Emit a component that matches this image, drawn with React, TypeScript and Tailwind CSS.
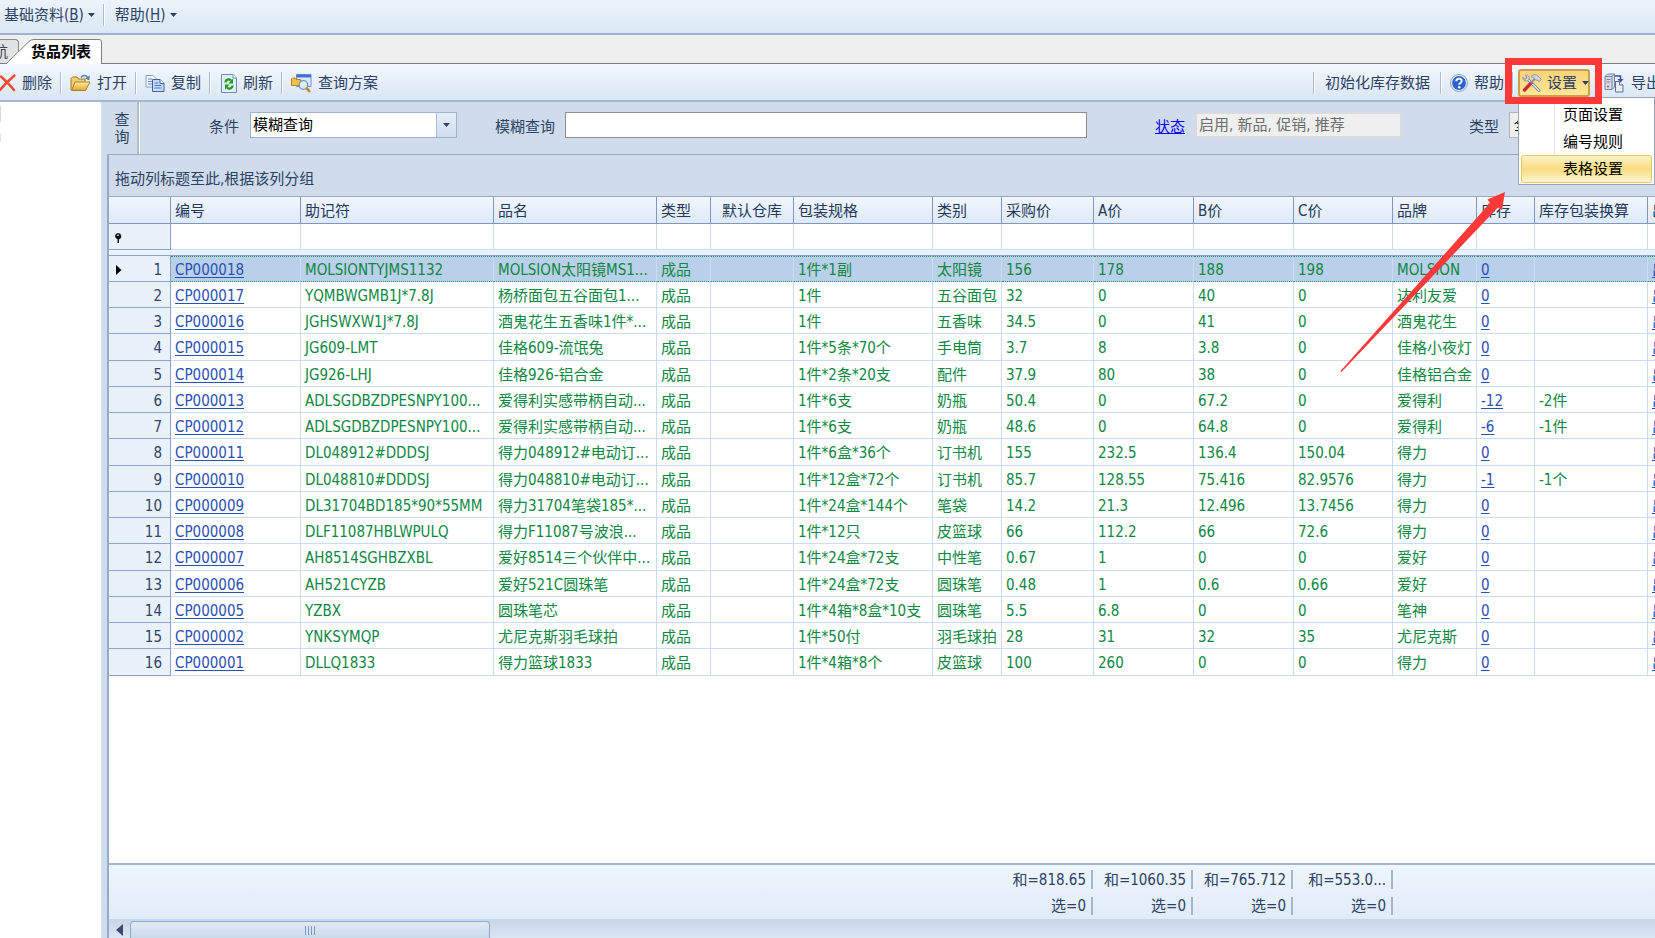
import type { ReactNode } from "react";

type Row = [string, string, string, string, string, string, string, string, string, string, string, string];

const rows: Row[] = [
  ["CP000018", "MOLSIONTYJMS1132", "MOLSION太阳镜MS1...", "1件*1副", "太阳镜", "156", "178", "188", "198", "MOLSION", "0", ""],
  ["CP000017", "YQMBWGMB1J*7.8J", "杨桥面包五谷面包1...", "1件", "五谷面包", "32", "0", "40", "0", "达利友爱", "0", ""],
  ["CP000016", "JGHSWXW1J*7.8J", "酒鬼花生五香味1件*...", "1件", "五香味", "34.5", "0", "41", "0", "酒鬼花生", "0", ""],
  ["CP000015", "JG609-LMT", "佳格609-流氓兔", "1件*5条*70个", "手电筒", "3.7", "8", "3.8", "0", "佳格小夜灯", "0", ""],
  ["CP000014", "JG926-LHJ", "佳格926-铝合金", "1件*2条*20支", "配件", "37.9", "80", "38", "0", "佳格铝合金", "0", ""],
  ["CP000013", "ADLSGDBZDPESNPY100...", "爱得利实感带柄自动...", "1件*6支", "奶瓶", "50.4", "0", "67.2", "0", "爱得利", "-12", "-2件"],
  ["CP000012", "ADLSGDBZDPESNPY100...", "爱得利实感带柄自动...", "1件*6支", "奶瓶", "48.6", "0", "64.8", "0", "爱得利", "-6", "-1件"],
  ["CP000011", "DL048912#DDDSJ", "得力048912#电动订...", "1件*6盒*36个", "订书机", "155", "232.5", "136.4", "150.04", "得力", "0", ""],
  ["CP000010", "DL048810#DDDSJ", "得力048810#电动订...", "1件*12盒*72个", "订书机", "85.7", "128.55", "75.416", "82.9576", "得力", "-1", "-1个"],
  ["CP000009", "DL31704BD185*90*55MM", "得力31704笔袋185*...", "1件*24盒*144个", "笔袋", "14.2", "21.3", "12.496", "13.7456", "得力", "0", ""],
  ["CP000008", "DLF11087HBLWPULQ", "得力F11087号波浪...", "1件*12只", "皮篮球", "66", "112.2", "66", "72.6", "得力", "0", ""],
  ["CP000007", "AH8514SGHBZXBL", "爱好8514三个伙伴中...", "1件*24盒*72支", "中性笔", "0.67", "1", "0", "0", "爱好", "0", ""],
  ["CP000006", "AH521CYZB", "爱好521C圆珠笔", "1件*24盒*72支", "圆珠笔", "0.48", "1", "0.6", "0.66", "爱好", "0", ""],
  ["CP000005", "YZBX", "圆珠笔芯", "1件*4箱*8盒*10支", "圆珠笔", "5.5", "6.8", "0", "0", "笔神", "0", ""],
  ["CP000002", "YNKSYMQP", "尤尼克斯羽毛球拍", "1件*50付", "羽毛球拍", "28", "31", "32", "35", "尤尼克斯", "0", ""],
  ["CP000001", "DLLQ1833", "得力篮球1833", "1件*4箱*8个", "皮篮球", "100", "260", "0", "0", "得力", "0", ""],
];

const headers = ["编号", "助记符", "品名", "类型", "默认仓库", "包装规格", "类别", "采购价", "A价", "B价", "C价", "品牌", "库存", "库存包装换算", "出"];

const summaries = [
  { sum: "和=818.65", picked: "选=0" },
  { sum: "和=1060.35", picked: "选=0" },
  { sum: "和=765.712", picked: "选=0" },
  { sum: "和=553.0...", picked: "选=0" },
];

function Caret() {
  return (
    <svg width="7" height="4" viewBox="0 0 7 4" className="shrink-0" aria-hidden="true">
      <path d="M0 0h7L3.500 4z" fill="#2b4265" />
    </svg>
  );
}

function Separator() {
  return <span className="h-[22px] w-[2px] shrink-0 border-l border-[#a9bcd6] bg-white" />;
}

function DeleteIcon() {
  return (
    <svg width="16" height="18" viewBox="0 0 16 18" className="shrink-0" aria-hidden="true">
      <path d="M1 2.500C5 6 10 11 14 16M14.500 1.500C9 6 4 11 0 16" fill="none" stroke="#f04a2c" strokeWidth="2.400" strokeLinecap="round" />
    </svg>
  );
}

function OpenIcon() {
  return (
    <svg width="21" height="18" viewBox="0 0 21 18" className="shrink-0" aria-hidden="true">
      <defs>
        <linearGradient id="folder" x1="0" y1="0" x2="0" y2="1">
          <stop offset="0" stopColor="#fff0a8" />
          <stop offset="1" stopColor="#dfa226" />
        </linearGradient>
      </defs>
      <path d="M1 16V4.500L2.500 3H7l1.500 2H15v3" fill="#f3cf6b" stroke="#9a7a35" />
      <path d="M1.500 16.500 5 8h15l-4.500 8.500z" fill="url(#folder)" stroke="#a8802f" />
      <path d="M11 3.500C13 .8 16.500 1 17.800 4" fill="none" stroke="#5f7da8" strokeWidth="1.500" />
      <path d="m19.800 1.500-.5 5-4.300-2z" fill="#5f7da8" />
    </svg>
  );
}

function CopyIcon() {
  return (
    <svg width="20" height="17" viewBox="0 0 20 17" className="shrink-0" aria-hidden="true">
      <path d="M1 .5h7l3 3v8.500H1z" fill="#f1f6fd" stroke="#8ba0c4" />
      <path d="M3 4h4M3 6.500h5M3 9h4" stroke="#5d86c9" />
      <path d="M7.500 4.500h7.500l4 4v8H7.500z" fill="#c9dcf6" stroke="#3f62a5" />
      <path d="M15 4.500v4h4" fill="#fff" stroke="#3f62a5" />
      <path d="M9.500 8h4M9.500 10.500h7M9.500 13h7" stroke="#4576c8" />
    </svg>
  );
}

function RefreshIcon() {
  return (
    <svg width="16" height="19" viewBox="0 0 16 19" className="shrink-0" aria-hidden="true">
      <path d="M.5.5H12l3.500 3.500v14.500H.5z" fill="#e4edf9" stroke="#6e8dbb" />
      <path d="M12 .5V4h3.500" fill="#fff" stroke="#6e8dbb" />
      <path d="M4.500 8.500C4.500 5.500 8 4.500 10 6.500" fill="none" stroke="#17a017" strokeWidth="2.200" />
      <path d="M12 4.500v5H7.500z" fill="#17a017" />
      <path d="M11.500 11.500c0 3-3.500 4-5.500 2" fill="none" stroke="#17a017" strokeWidth="2.200" />
      <path d="M4 15.500v-5h4.500z" fill="#17a017" />
    </svg>
  );
}

function QueryIcon() {
  return (
    <svg width="21" height="19" viewBox="0 0 21 19" className="shrink-0" aria-hidden="true">
      <path d="M5.500.5h14.500v12H5.500z" fill="#dce9fb" stroke="#6e92cf" />
      <path d="M5.500.5h14.500v3H5.500z" fill="#3f72cf" />
      <path d="M.5 11.500V5l1-1h3l1 1.500h4v6z" fill="#f1c04a" stroke="#b28624" />
      <circle cx="12.500" cy="11" r="4.300" fill="#d9f0fb" stroke="#7796b8" strokeWidth="1.300" />
      <path d="m15.700 14.300 2.500 2.700" stroke="#b98731" strokeWidth="2.600" strokeLinecap="round" />
    </svg>
  );
}

function HelpIcon() {
  return (
    <svg width="18" height="18" viewBox="0 0 18 18" className="shrink-0" aria-hidden="true">
      <circle cx="9" cy="9" r="8.500" fill="#e8eef8" stroke="#8ea5c9" />
      <circle cx="9" cy="9" r="6.900" fill="#2c66cc" />
      <path d="M6.300 7.200C6.300 3.800 11.800 3.900 11.700 7c0 1.900-2.500 1.900-2.500 3.800" fill="none" stroke="#fff" strokeWidth="1.900" />
      <circle cx="9.200" cy="13.200" r="1.200" fill="#fff" />
    </svg>
  );
}

function ToolsIcon() {
  return (
    <svg width="20" height="18" viewBox="0 0 20 18" className="shrink-0" aria-hidden="true">
      <path d="m5 4.500 12 12" stroke="#7285a3" strokeWidth="3" strokeLinecap="round" />
      <path d="m5 4.500 12 12" stroke="#dfe6f0" strokeWidth="1.300" strokeLinecap="round" />
      <path d="M.8 3.500 3.300 5.500 5 3.800 3.500 1C7 .8 8 4 6.300 6.300 4 7.500 1 7 .8 3.500z" fill="#d5deea" stroke="#7285a3" strokeWidth=".8" />
      <path d="M2.500 16 9 9.200" stroke="#c8283a" strokeWidth="3.400" strokeLinecap="round" />
      <path d="m9 9.200 4.500-5" stroke="#8292aa" strokeWidth="2" />
      <path d="M9 2.500C12-.5 15 .5 17.500 3.500l1.800 1.700-2 2.300-2-1.300-1.800-.2-2-2.300z" fill="#ccd6e4" stroke="#7285a3" strokeWidth=".8" />
    </svg>
  );
}

function ExportIcon() {
  return (
    <svg width="21" height="20" viewBox="0 0 21 20" className="shrink-0" aria-hidden="true">
      <path d="M1 3.500 3.500 1h7v13L8 16.500H1z" fill="#d6dce7" stroke="#77839c" />
      <path d="M1 3.500h7l2.500-2.500M8 3.500v13M2.500 6.500h4M2.500 9h4" fill="none" stroke="#77839c" />
      <circle cx="4" cy="13.500" r="1" fill="#c8452d" />
      <path d="M11 3h5.500v4" fill="none" stroke="#3451a5" strokeWidth="1.500" />
      <path d="M13.500 6h6l-3 3.500z" fill="#3451a5" />
      <path d="M11.500 8.500h4l3.500 3.500v7h-7.500z" fill="#e9effa" stroke="#54719f" />
      <path d="M15.500 8.500V12H19" fill="#fff" stroke="#54719f" />
    </svg>
  );
}

function ToolButton({ icon, children }: { icon?: ReactNode; children: ReactNode }) {
  return (
    <button type="button" className="flex shrink-0 items-center gap-[6px] whitespace-nowrap">
      {icon}
      {children}
    </button>
  );
}

function MenuBar() {
  return (
    <nav className="flex h-[35px] shrink-0 items-start border-b-2 border-[#9fb0cb] bg-linear-to-b from-[#edf3fb] to-[#dbe7f4] pl-1 pt-1">
      <button type="button" className="flex h-[22px] items-center gap-1">
        <span>基础资料(<u>B</u>)</span>
        <Caret />
      </button>
      <span className="ml-2 mr-[10px] flex"><Separator /></span>
      <button type="button" className="flex h-[22px] items-center gap-1">
        <span>帮助(<u>H</u>)</span>
        <Caret />
      </button>
    </nav>
  );
}

function TabStrip() {
  return (
    <div role="tablist" className="relative flex h-[29px] shrink-0 items-end border-b border-[#7d7d7d] bg-[#efefef]">
      <button type="button" role="tab" aria-selected="false" className="flex h-6 w-[19px] justify-end overflow-hidden rounded-tr-sm border-r border-t border-[#8a8a8a] bg-[#e2e2e2] pr-[10px] pt-px text-[#3c4654]">
        航
      </button>
      <button type="button" role="tab" aria-selected="true" className="relative -mb-px -ml-3 h-[25px] w-[95px] pl-6 text-left font-bold text-black">
        <svg width="95" height="25" viewBox="0 0 95 25" className="absolute left-0 top-0" aria-hidden="true">
          <path d="M0 25V23.500L22 2.500Q24 .5 27 .5H92Q94.500.5 94.500 3V25z" fill="#fff" />
          <path d="M0 24 22 2.500Q24 .5 27 .5H92Q94.500.5 94.500 3V25" fill="none" stroke="#808080" />
        </svg>
        <span className="relative whitespace-nowrap">货品列表</span>
      </button>
    </div>
  );
}

function SettingsMenu() {
  return (
    <div role="menu" className="absolute left-0 top-7 z-10 flex h-[88px] w-[137px] flex-col border border-[#9aa3b0] bg-white px-[2px] text-black">
      <span className="absolute left-[35px] top-0 h-[57px] w-px bg-[#e3e3e3]" />
      <button type="button" role="menuitem" className="h-[30px] pl-[42px] pt-[3px] text-left">页面设置</button>
      <button type="button" role="menuitem" className="h-[27px] pl-[42px] text-left">编号规则</button>
      <button type="button" role="menuitem" className="h-7 rounded-[3px] border border-[#e5c765] bg-linear-to-b from-[#fdf3c9] via-[#f8dc80] to-[#fdf6cf] pl-[41px] text-left">表格设置</button>
    </div>
  );
}

function Toolbar() {
  return (
    <div className="flex h-[38px] shrink-0 items-center border-b-2 border-[#a3b7d4] bg-linear-to-b from-[#f4f8fd] to-[#d9e6f4] pt-[2px]">
      <div className="flex items-center gap-2">
        <ToolButton icon={<DeleteIcon />}>删除</ToolButton>
        <Separator />
        <ToolButton icon={<OpenIcon />}>打开</ToolButton>
        <Separator />
        <ToolButton icon={<CopyIcon />}>复制</ToolButton>
        <Separator />
        <span className="pl-[2px]"><ToolButton icon={<RefreshIcon />}>刷新</ToolButton></span>
        <Separator />
        <ToolButton icon={<QueryIcon />}>查询方案</ToolButton>
      </div>
      <div className="ml-auto flex w-[342px] items-center">
        <Separator />
        <span className="px-[10px]"><ToolButton>初始化库存数据</ToolButton></span>
        <Separator />
        <span className="px-2"><ToolButton icon={<HelpIcon />}>帮助</ToolButton></span>
        <Separator />
        <div className="relative ml-1 shrink-0">
          <button type="button" aria-haspopup="menu" aria-expanded="true" className="flex h-7 w-[72px] items-center gap-[5px] rounded-[3px] border-2 border-[#c9a04d] bg-linear-to-b from-[#fbd27a] to-[#ffe694] pl-[2px]">
            <ToolsIcon />
            <span className="whitespace-nowrap">设置</span>
            <Caret />
          </button>
          <SettingsMenu />
          <div className="pointer-events-none absolute -left-[13px] -top-[11px] z-20 h-[46px] w-[97px] border-[7px] border-[#fc3838]" />
        </div>
        <span className="pl-[14px]"><ToolButton icon={<ExportIcon />}>导出</ToolButton></span>
      </div>
    </div>
  );
}

function FilterPanel() {
  return (
    <form className="flex h-[52px] shrink-0 items-start">
      <div className="flex h-full w-8 shrink-0 items-center justify-center border-r-2 border-[#b9bcc4] pt-px leading-[17px]">
        <span className="w-[15px]">查询</span>
      </div>
      <div className="flex h-full flex-1 items-start border-l border-white pt-[10px]">
        <label htmlFor="condition" className="ml-[69px] w-[41px] shrink-0 pt-px leading-7">条件</label>
        <div className="relative h-[26px] w-[207px] shrink-0">
          <select id="condition" className="h-full w-full appearance-none border border-[#9db1d0] bg-white pl-[2px] leading-6 text-black">
            <option>模糊查询</option>
          </select>
          <span className="pointer-events-none absolute right-px top-px flex h-6 w-5 items-center justify-center border-l border-[#a9bbd6] bg-linear-to-b from-[#e6eef8] to-[#cfdded]">
            <Caret />
          </span>
        </div>
        <label htmlFor="keyword" className="ml-[38px] w-[70px] shrink-0 whitespace-nowrap pt-px leading-7">模糊查询</label>
        <input id="keyword" type="text" className="h-[26px] min-w-0 flex-1 border border-[#8e8e8e] bg-white px-1 text-black" />
        <a href="#status" className="ml-[68px] w-10 shrink-0 pt-px leading-7 text-[#0000ff] underline">状态</a>
        <input type="text" aria-label="状态" disabled defaultValue="启用, 新品, 促销, 推荐" className="h-[26px] w-[207px] shrink-0 border-2 border-[#d9dbde] bg-[#efefef] pb-1 pl-[2px] text-[#6d6d6d]" />
        <label htmlFor="kind" className="ml-[67px] w-10 shrink-0 pt-px leading-7">类型</label>
        <select id="kind" className="h-[26px] w-[146px] shrink-0 appearance-none border border-[#b4b4b4] bg-[#efefef] pl-1 text-black">
          <option>全部</option>
        </select>
      </div>
    </form>
  );
}

const cell = "border-b border-r border-[#c8dcf6] px-1 pb-0 pt-[2px]";
const activeCell = "border-y border-r border-y-[#2c8f68] border-r-[#c8dcf6] [border-top-style:dotted] [border-bottom-style:dotted] bg-[#b9d0ea] px-1 pb-0 pt-px";
const fixedCell = "border-b border-r border-[#8ba3c7] bg-[#e9f1fb] pb-0 pt-[2px]";
const headCell = "border-b border-r border-[#7f97bd] bg-linear-to-b from-[#f2f7fd] to-[#dde9f7] px-1 pb-0 pt-[2px] font-normal";

function ProductTable() {
  return (
    <table className="w-[1646px] table-fixed border-separate border-spacing-0 whitespace-nowrap leading-[22px] text-[#0c8744]">
      <colgroup>
        <col className="w-[62px]" />
        <col className="w-[130px]" />
        <col className="w-[193px]" />
        <col className="w-[163px]" />
        <col className="w-[54px]" />
        <col className="w-[83px]" />
        <col className="w-[139px]" />
        <col className="w-[69px]" />
        <col className="w-[92px]" />
        <col className="w-[100px]" />
        <col className="w-[100px]" />
        <col className="w-[99px]" />
        <col className="w-[84px]" />
        <col className="w-[58px]" />
        <col className="w-[113px]" />
        <col className="w-[107px]" />
      </colgroup>
      <thead className="text-[#24395b]">
        <tr className="h-[27px]">
          <th className={headCell} aria-label="行号" />
          {headers.map((h) => (
            <th key={h} className={`${headCell} ${h === "默认仓库" ? "text-center" : "text-left"}`}>
              {h}
            </th>
          ))}
        </tr>
        <tr className="h-[26px]">
          <td className={`${fixedCell} pl-[5px]`}>
            <svg width="8" height="10" viewBox="0 0 8 10" aria-hidden="true">
              <path d="M4 0a3.500 3.200 0 0 1 1 6.200V10H3.500V6.200A3.500 3.200 0 0 1 4 0z" fill="#111" />
              <path d="M3 2.200h2" stroke="#fff" />
            </svg>
          </td>
          {headers.map((h) => (
            <td key={h} className={`${cell} bg-white`} />
          ))}
        </tr>
        <tr className="h-[6px]">
          <td colSpan={16} className="border-b border-[#8ba3c7] bg-[#e9f1fb] p-0" />
        </tr>
      </thead>
      <tbody>
        {rows.map(([code, memo, name, spec, kind, cost, a, b, c, brand, stock, pack], i) => {
          const base = i === 0 ? activeCell : `${cell} bg-white`;
          return (
            <tr key={code} className="h-[26px] [&:nth-child(4n)]:h-[27px]">
              <th scope="row" className={`${fixedCell} pr-2 font-normal text-[#2f4668]`}>
                <span className="flex items-center justify-end">
                  {i === 0 && (
                    <svg width="6" height="10" viewBox="0 0 6 10" className="ml-[7px] mr-auto" aria-hidden="true">
                      <path d="M0 0 5.500 5 0 10z" fill="#000" />
                    </svg>
                  )}
                  {i + 1}
                </span>
              </th>
              <td className={base}><a href={`#${code}`} className="text-[#2b50b4] underline underline-offset-2">{code}</a></td>
              <td className={base}>{memo}</td>
              <td className={base}>{name}</td>
              <td className={base}>成品</td>
              <td className={base} />
              <td className={base}>{spec}</td>
              <td className={base}>{kind}</td>
              <td className={base}>{cost}</td>
              <td className={base}>{a}</td>
              <td className={base}>{b}</td>
              <td className={base}>{c}</td>
              <td className={base}>{brand}</td>
              <td className={base}><a href={`#stock-${code}`} className="text-[#2b50b4] underline underline-offset-2">{stock}</a></td>
              <td className={base}>{pack}</td>
              <td className={base}><a href={`#out-${code}`} className="text-[#2b50b4] underline underline-offset-2">出</a></td>
            </tr>
          );
        })}
      </tbody>
    </table>
  );
}

function SummaryFooter() {
  return (
    <div className="h-14 shrink-0 border-t-2 border-[#a3b5d2] bg-linear-to-b from-[#eff5fc] to-[#e0ecf8] pl-[892px] pt-[5px]">
      <div className="grid w-[392px] grid-cols-[92px_100px_100px_100px] gap-y-2 whitespace-nowrap text-right leading-[18px]">
        {summaries.map((s) => (
          <span key={s.sum} className="border-r-2 border-[#a3b5d2] pr-[5px] pt-px">{s.sum}</span>
        ))}
        {summaries.map((s) => (
          <span key={s.sum} className="border-r-2 border-[#a3b5d2] pr-[5px]">{s.picked}</span>
        ))}
      </div>
    </div>
  );
}

function ScrollBar() {
  return (
    <div className="flex h-[19px] shrink-0 items-end bg-linear-to-b from-[#c6d5e8] to-[#dbe6f3]">
      <button type="button" aria-label="向左滚动" className="flex h-full w-[21px] items-center justify-center pt-[2px]">
        <svg width="7" height="12" viewBox="0 0 7 12" aria-hidden="true">
          <path d="M7 0v12L0 6z" fill="#3d4a6b" />
        </svg>
      </button>
      <div className="flex h-[17px] w-[360px] items-center justify-center gap-[2px] rounded-t-sm border border-b-0 border-[#8fa8cf] bg-linear-to-b from-[#e1eaf5] to-[#c9d9eb]">
        <span className="h-[9px] w-px bg-[#8199c2]" />
        <span className="h-[9px] w-px bg-[#8199c2]" />
        <span className="h-[9px] w-px bg-[#8199c2]" />
        <span className="h-[9px] w-px bg-[#8199c2]" />
      </div>
    </div>
  );
}

export default function App() {
  return (
    <div className="relative flex h-screen flex-col overflow-hidden bg-white font-['DejaVu_Sans_Condensed','Noto_Sans_CJK_SC',sans-serif] text-[15px] leading-[22px] text-[#2b4265]">
      <MenuBar />
      <TabStrip />
      <Toolbar />
      <div className="flex min-h-0 flex-1">
        <aside className="w-[101px] shrink-0 bg-white pt-1">
          <div className="h-4 w-px bg-[#d8d8d8]" />
          <div className="mt-3 h-2 w-px bg-[#e0e0e0]" />
        </aside>
        <main className="flex min-w-0 flex-1 flex-col overflow-hidden bg-[#d0dcec] pl-[6px]">
          <FilterPanel />
          <section className="flex min-h-0 flex-1 flex-col overflow-hidden border-l-2 border-t border-[#93aaca]">
            <p className="h-[42px] shrink-0 border-b border-[#93aaca] pl-[6px] pt-[13px]">拖动列标题至此,根据该列分组</p>
            <div className="min-h-0 flex-1 overflow-hidden bg-white">
              <ProductTable />
            </div>
            <SummaryFooter />
            <ScrollBar />
          </section>
        </main>
      </div>
      <svg width="166" height="182" viewBox="0 0 166 182" className="pointer-events-none absolute right-[149px] top-[191px] z-20" aria-hidden="true">
        <path d="M.5 180 150 12 147.500 8.500 165 1 162 19 158 16.500 1.500 181z" fill="#fc3838" />
      </svg>
    </div>
  );
}
